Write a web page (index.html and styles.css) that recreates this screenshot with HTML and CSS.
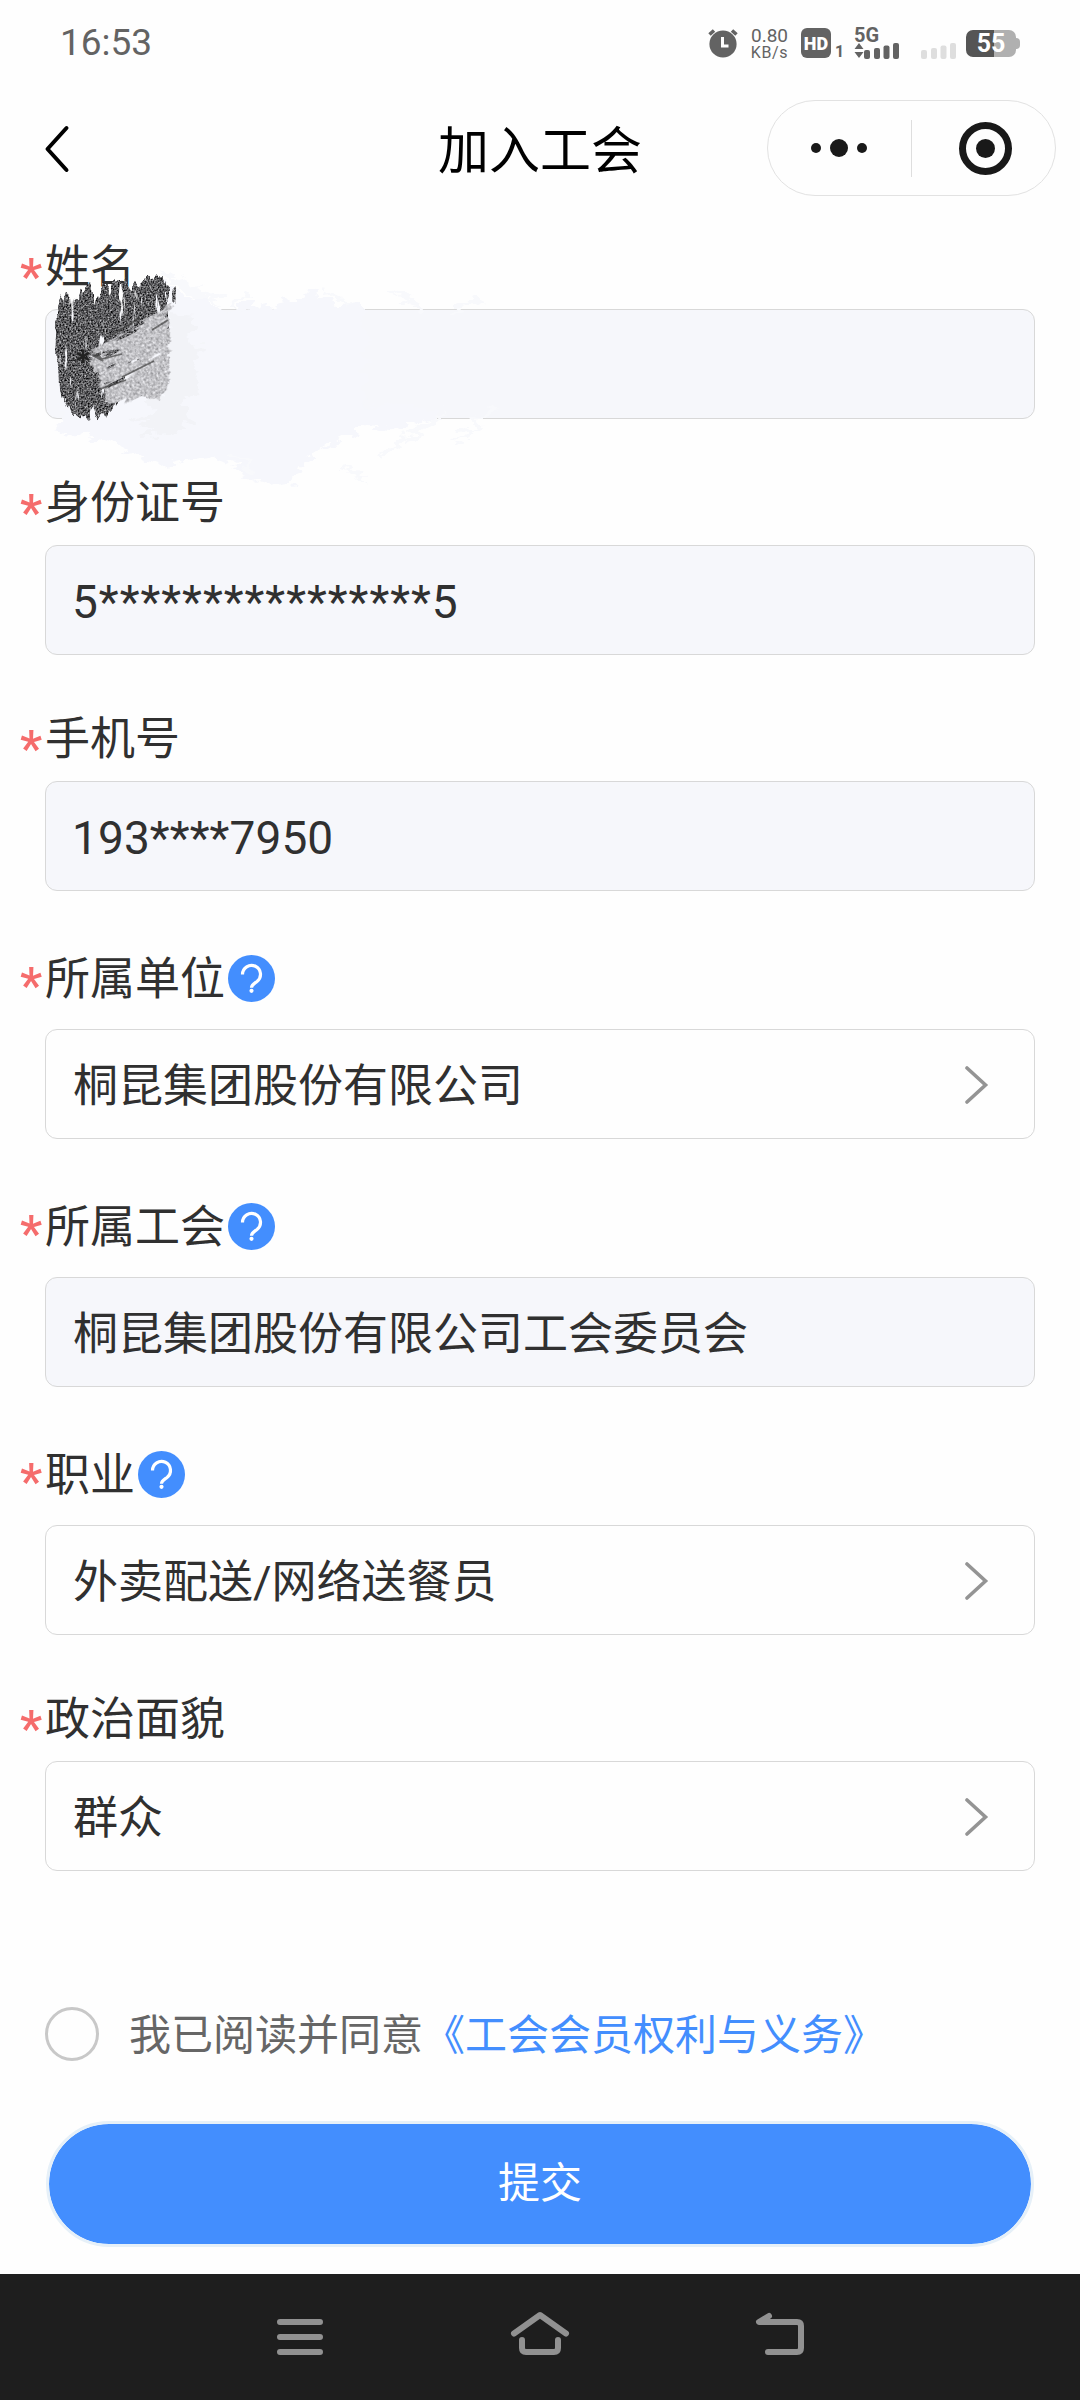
FILE: index.html
```html
<!DOCTYPE html>
<html lang="zh-CN">
<head>
<meta charset="utf-8">
<title>加入工会</title>
<link rel="stylesheet" href="styles.css">
</head>
<body>
<div class="screen">
  <div class="status">
    <span class="time">16:53</span>
    <svg class="i-alarm" width="32" height="30" viewBox="0 0 32 30"><circle cx="16" cy="16" r="13.6" fill="#636363"/><path d="M2.5 6.500L7 2.500M29.500 6.500L25 2.500" stroke="#636363" stroke-width="3.600"/><path d="M15.500 9v9h6" fill="none" stroke="#fff" stroke-width="3"/></svg>
    <span class="speed"><span class="rate">0.80</span><span class="unit">KB/s</span></span>
    <span class="hd">HD</span><span class="one">1</span>
    <span class="net"><span class="gen">5G</span>
      <svg width="46" height="17" viewBox="0 0 46 17" fill="#636363"><path d="M0.500 7L5 1l4.500 6zM0.500 10L5 16l4.500-6z"/><rect x="10" y="8" width="6" height="9" rx="2"/><rect x="20" y="6" width="6" height="11" rx="2"/><rect x="29.500" y="3.500" width="6" height="13.500" rx="2"/><rect x="39" y="1" width="6" height="16" rx="2"/></svg>
    </span>
    <svg class="i-sim" width="36" height="17" viewBox="0 0 36 17" fill="#dedede"><rect y="8" width="6" height="9" rx="2"/><rect x="10" y="6" width="6" height="11" rx="2"/><rect x="19.500" y="3.500" width="6" height="13.500" rx="2"/><rect x="29" y="1" width="6" height="16" rx="2"/></svg>
    <span class="battery">55</span>
  </div>

  <header class="header">
    <svg class="back" width="28" height="50" viewBox="0 0 28 50"><path d="M23.500 4L4.500 25l19 21" fill="none" stroke="#000" stroke-width="4" stroke-linecap="round" stroke-linejoin="round"/></svg>
    <h1 class="title">加入工会</h1>
    <div class="capsule">
      <svg width="287" height="94" viewBox="0 0 287 94"><g fill="#191919"><circle cx="48" cy="47" r="5"/><circle cx="71" cy="47" r="9"/><circle cx="94" cy="47" r="5"/><circle cx="217.500" cy="47.500" r="9.500"/></g><circle cx="217.500" cy="47.500" r="23" fill="none" stroke="#191919" stroke-width="7"/><path d="M143.500 19v57" stroke="#dedede"/></svg>
    </div>
  </header>

  <main class="form">
    <section class="field">
      <label class="label"><i class="req">*</i>姓名</label>
      <div class="box filled">
        <svg class="smudge" width="480" height="250" viewBox="40 250 480 250">
          <defs>
            <filter id="dark" x="-10%" y="-10%" width="120%" height="120%" color-interpolation-filters="sRGB">
              <feTurbulence type="fractalNoise" baseFrequency="0.16 0.025" numOctaves="3" seed="4" result="streak"/>
              <feDisplacementMap in="SourceGraphic" in2="streak" scale="24" xChannelSelector="B" yChannelSelector="G" result="shape"/>
              <feColorMatrix in="streak" values="0 0 0 0 0  0 0 0 0 0  0 0 0 0 0  -16 0 0 0 11.8" result="holes"/>
              <feComposite in="shape" in2="holes" operator="in" result="cut"/>
              <feTurbulence type="fractalNoise" baseFrequency="0.6" numOctaves="2" seed="9"/>
              <feColorMatrix values="1.2 0 0 0 -0.24  1.2 0 0 0 -0.24  1.2 0 0 0 -0.23  0 0 0 0 1"/>
              <feComposite in2="cut" operator="in"/>
            </filter>
            <filter id="light" x="-10%" y="-10%" width="120%" height="120%" color-interpolation-filters="sRGB">
              <feTurbulence type="fractalNoise" baseFrequency="0.025 0.14" numOctaves="3" seed="7" result="streak"/>
              <feDisplacementMap in="SourceGraphic" in2="streak" scale="16" xChannelSelector="G" yChannelSelector="R" result="shape"/>
              <feColorMatrix in="streak" values="0 0 0 0 0  0 0 0 0 0  0 0 0 0 0  -16 0 0 0 11.8" result="holes"/>
              <feComposite in="shape" in2="holes" operator="in" result="cut"/>
              <feTurbulence type="fractalNoise" baseFrequency="0.45" numOctaves="2" seed="3"/>
              <feColorMatrix values="0.6 0 0 0 0.46  0.6 0 0 0 0.46  0.6 0 0 0 0.475  0 0 0 0 1"/>
              <feComposite in2="cut" operator="in"/>
            </filter>
            <filter id="pale" x="-10%" y="-10%" width="120%" height="120%" color-interpolation-filters="sRGB">
              <feTurbulence type="fractalNoise" baseFrequency="0.05 0.12" numOctaves="3" seed="12"/>
              <feDisplacementMap in="SourceGraphic" scale="24" xChannelSelector="R" yChannelSelector="G"/>
            </filter>
          </defs>
          <path filter="url(#pale)" fill="#f6f7fc" d="M152 281l18 1 10 9 25 7 16 12 35-7 4 6 48-14 8-2 22 14 26-1 0 10 0 88 10 2 60 2 0 8-34 14-34-4-34 20-4-3-26 20-10 20-20 4-60-30-50 8-60-26-50-8 15-20-10-4 25-20z"/>
          <path filter="url(#pale)" stroke="#f8f9fc" stroke-width="4" d="M160 270l50 32M180 278l40 26M232 306l18-14M325 288l24 20M392 288l30 20M400 302l24 6M452 308l30-8M462 306l18-10M232 452l20 18M345 466l22 16M395 446l40-30M410 440l36-28M454 442l36-30M470 428l26-20M380 456l24-22"/>
          <path filter="url(#pale)" fill="#f2f3f7" d="M170 315l26 2-6 20 12 12-10 20 8 20-14 12 8 20-24 12-28 4 8-10-18-3 22-14-8-6 20-16z"/>
          <path filter="url(#dark)" d="M56 309l10-14 10 6 6-14 8-1 6 12 16-15 12-4 8 10 16-12 14-1 8 12-2 44-44 40-4 32-12 8-14 6-6-8-10 6-10-6-8-20z"/>
          <g transform="rotate(-26 96 356)"><g filter="url(#light)"><path transform="rotate(26 96 356)" d="M91 353l26-15 22-14 31-22 0 36-1 38-6 24-20-4-20 6-18-4-6-14-5-12z"/></g></g>
          <path d="M94 356l9 5-5-7zM102 359l20-5M100 389l26-9M122 377l32-16M112 335l28-17M152 330l16-10" fill="#333" stroke="#444" stroke-width="1.800" opacity=".7"/>
          <path d="M83 350v13M77 353l12 7M89 353l-12 7" stroke="#222" stroke-width="2.500"/>
        </svg>
      </div>
    </section>
    <section class="field">
      <label class="label"><i class="req">*</i>身份证号</label>
      <div class="box filled num">5****************5</div>
    </section>
    <section class="field">
      <label class="label"><i class="req">*</i>手机号</label>
      <div class="box filled num phone">193****7950</div>
    </section>
    <section class="field">
      <label class="label tall"><i class="req">*</i>所属单位<svg class="help" width="47" height="47" viewBox="0 0 47 47"><circle cx="23.500" cy="23.500" r="23.500" fill="#438efe"/><path d="M14.500 19.500a9 9 0 1 1 14.500 7c-3.500 2.500-5.500 3.500-5.500 6.200" fill="none" stroke="#fff" stroke-width="3.200"/><circle cx="23.500" cy="35.800" r="2.100" fill="#fff"/></svg></label>
      <div class="box">桐昆集团股份有限公司<svg class="arrow" width="24" height="40" viewBox="0 0 24 40"><path d="M2 3l18.500 17L2 37" fill="none" stroke="#949494" stroke-width="3.600" stroke-linecap="round"/></svg></div>
    </section>
    <section class="field">
      <label class="label tall"><i class="req">*</i>所属工会<svg class="help" width="47" height="47" viewBox="0 0 47 47"><circle cx="23.500" cy="23.500" r="23.500" fill="#438efe"/><path d="M14.500 19.500a9 9 0 1 1 14.500 7c-3.500 2.500-5.500 3.500-5.500 6.200" fill="none" stroke="#fff" stroke-width="3.200"/><circle cx="23.500" cy="35.800" r="2.100" fill="#fff"/></svg></label>
      <div class="box filled">桐昆集团股份有限公司工会委员会</div>
    </section>
    <section class="field">
      <label class="label tall"><i class="req">*</i>职业<svg class="help" width="47" height="47" viewBox="0 0 47 47"><circle cx="23.500" cy="23.500" r="23.500" fill="#438efe"/><path d="M14.500 19.500a9 9 0 1 1 14.500 7c-3.500 2.500-5.500 3.500-5.500 6.200" fill="none" stroke="#fff" stroke-width="3.200"/><circle cx="23.500" cy="35.800" r="2.100" fill="#fff"/></svg></label>
      <div class="box">外卖配送/网络送餐员<svg class="arrow" width="24" height="40" viewBox="0 0 24 40"><path d="M2 3l18.500 17L2 37" fill="none" stroke="#949494" stroke-width="3.600" stroke-linecap="round"/></svg></div>
    </section>
    <section class="field">
      <label class="label"><i class="req">*</i>政治面貌</label>
      <div class="box">群众<svg class="arrow" width="24" height="40" viewBox="0 0 24 40"><path d="M2 3l18.500 17L2 37" fill="none" stroke="#949494" stroke-width="3.600" stroke-linecap="round"/></svg></div>
    </section>
  </main>

  <div class="agree"><span class="radio"></span><p class="terms">我已阅读并同意<a class="link">《工会会员权利与义务》</a></p></div>
  <button class="submit">提交</button>

  <nav class="nav">
    <svg width="60" height="60" viewBox="0 0 60 60"><path d="M10 18h40M10 33h40M10 48h40" stroke="#919191" stroke-width="6" stroke-linecap="round"/></svg>
    <svg width="60" height="60" viewBox="0 0 60 60"><path d="M4 29.500L30 11l26 18.500M12 36v8q0 4 4 4h28q4 0 4-4v-8" fill="none" stroke="#919191" stroke-width="6" stroke-linecap="round" stroke-linejoin="round"/></svg>
    <svg width="60" height="60" viewBox="0 0 60 60"><path d="M19 12L9 18h38q4 0 4 4v22q0 4-4 4H18" fill="none" stroke="#919191" stroke-width="6" stroke-linecap="round" stroke-linejoin="round"/></svg>
  </nav>
</div>
</body>
</html>
```
FILE: styles.css
```css
* { box-sizing: border-box; }
body { margin: 0; background: #fefefe; color: #303030; font-family: Roboto, "Noto Sans CJK SC", sans-serif; }
svg { display: block; flex: none; }
.screen { width: 1080px; height: 2400px; display: flex; flex-direction: column; overflow: hidden; }

.status { height: 86px; padding: 0 60px 0 60px; display: flex; align-items: center; color: #636363; }
.time { font-size: 37px; width: 647px; line-height: 84px; padding-bottom: 1px; }
.i-alarm { margin-bottom: 1px; }
.speed { display: flex; flex-direction: column; width: 41px; margin-left: 10px; align-items: center; }
.rate { font-size: 19px; line-height: 19px; }
.unit { font-size: 16px; line-height: 16px; letter-spacing: .6px; }
.hd { width: 30px; height: 30px; margin-left: 11px; border-radius: 6px; background: #636363; color: #fff; font-size: 18px; font-weight: 900; line-height: 31px; text-align: center; }
.one { font-size: 16px; font-weight: 700; width: 14px; margin: 16px 0 0 4px; }
.net { width: 66px; height: 31px; margin-left: 5px; display: flex; flex-direction: column; }
.gen { font-size: 20px; font-weight: 700; line-height: 15px; height: 14px; }
.i-sim { margin-top: 14px; margin-left: 1px; }
.battery { position: relative; width: 50px; height: 27px; margin-left: 9px; border-radius: 7px; background: linear-gradient(90deg, #555 57%, #b0b0b0 57%); color: #fff; font-size: 25px; font-weight: 700; line-height: 28px; text-align: center; }
.battery::after { content: ""; position: absolute; right: -4px; top: 8px; width: 4px; height: 11px; border-radius: 0 4px 4px 0; background: #b0b0b0; }

.header { height: 149px; padding: 14px 24px 0 43px; display: grid; grid-template-columns: 366px 1fr 289px; align-items: start; }
.back { margin-top: 24px; }
.title { margin: 0; padding-left: 29px; font-size: 51px; line-height: 103px; font-weight: 400; color: #000; }
.capsule { width: 289px; height: 96px; border: 1px solid #e2e2e2; border-radius: 48px; }

.form { padding: 0 45px 0 20px; font-size: 45px; }
.field { margin-bottom: 52px; }
.label { display: flex; align-items: center; height: 60px; margin-bottom: 14px; padding-top: 5px; line-height: 60px; }
.label.tall { height: 72px; padding-top: 2px; }
.req { width: 25px; padding-top: 18px; font: 500 50px/60px Roboto, sans-serif; color: #f56c6c; }
.label.tall .req { padding-top: 12px; }
.help { margin: 0 0 4px 3px; }
.box { position: relative; height: 110px; margin-left: 25px; padding: 0 45px 4px 27px; display: flex; align-items: center; justify-content: space-between; border: 1px solid #d8d8d8; border-radius: 12px; }
.arrow { margin-top: 5px; }
.filled { background: #f6f7fb; }
.num { font-size: 46px; letter-spacing: 1px; padding-top: 7px; padding-left: 26px; }
.phone { letter-spacing: .1px; }
.smudge { position: absolute; left: -6px; top: -60px; }

.agree { height: 60px; margin-top: 81px; padding-left: 45px; display: flex; align-items: center; gap: 30px; }
.radio { width: 54px; height: 54px; border: 3px solid #c8c8c8; border-radius: 50%; }
.terms { margin: 0; padding-top: 4px; font-size: 42px; line-height: 60px; color: #666; }
.link { color: #438efe; }
.submit { width: 988px; height: 126px; margin: 57px 46px 27px; padding: 0; border: 3px solid #e6f0f8; border-radius: 63px; background: #438efe; background-clip: padding-box; color: #fff; font: 400 42px/60px Roboto, "Noto Sans CJK SC", sans-serif; }
.nav { flex: 1; padding: 30px 270px 0; display: flex; justify-content: space-between; align-items: flex-start; background: #1e1e1e; }
```
